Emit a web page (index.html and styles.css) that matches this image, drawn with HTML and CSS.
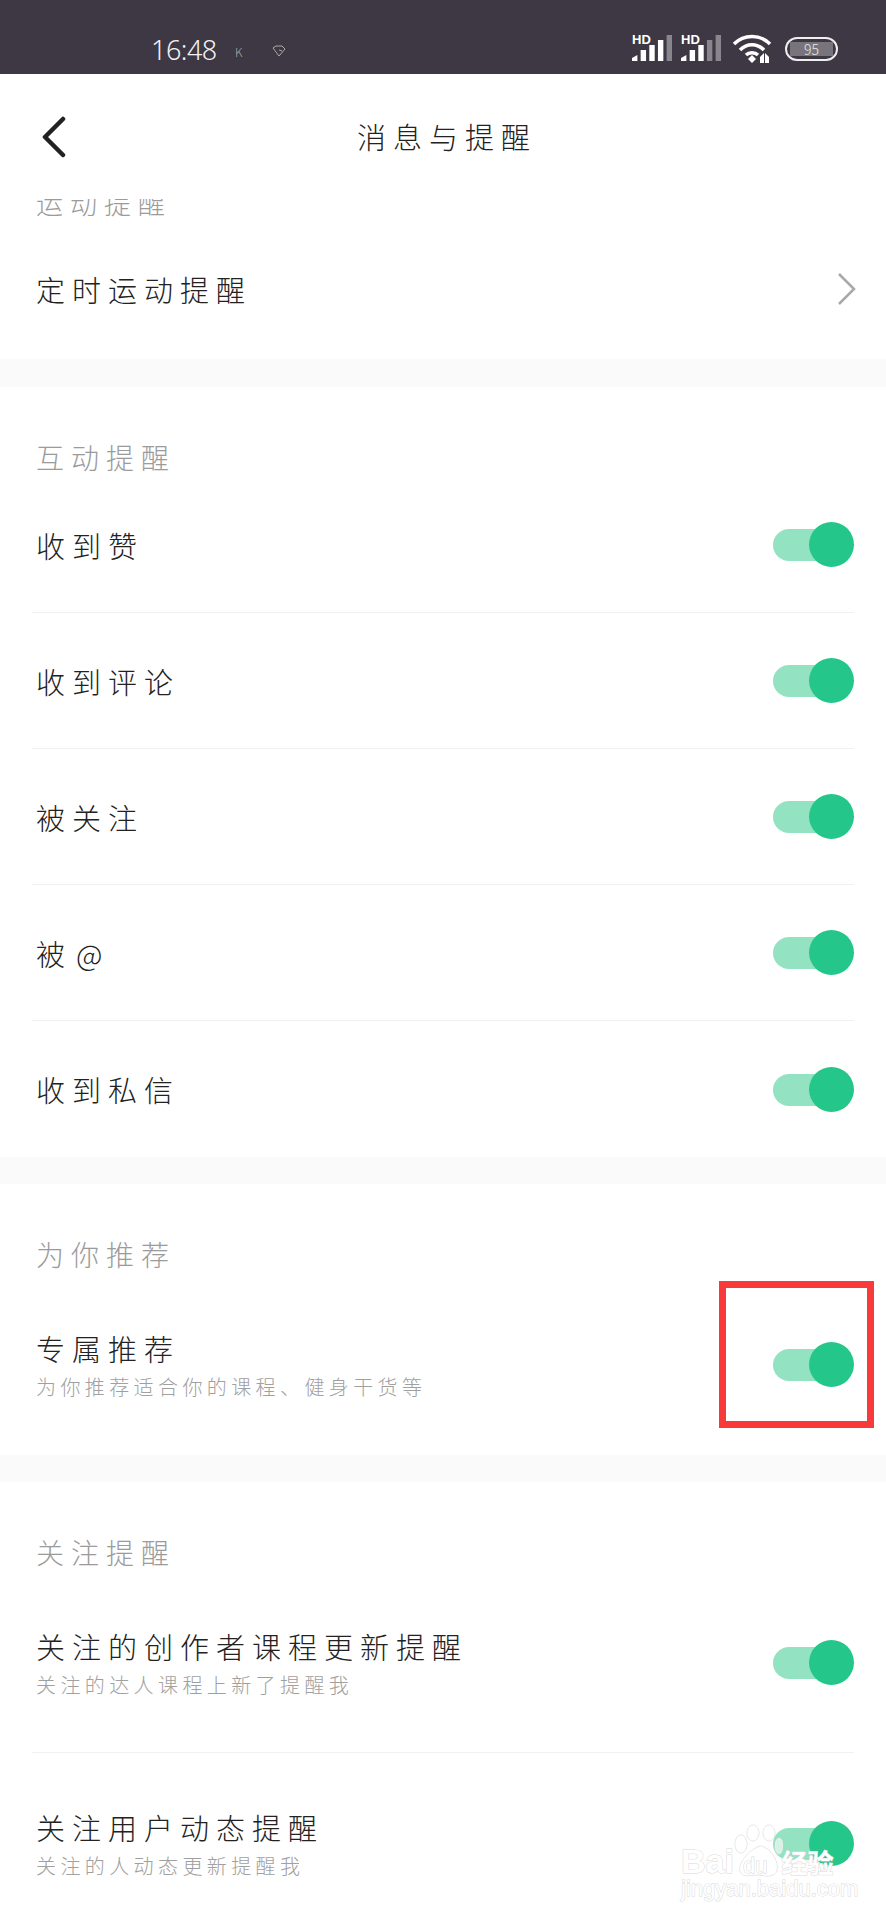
FILE: index.html
```html
<!DOCTYPE html>
<html lang="zh-CN">
<head>
    <meta charset="UTF-8">
    <meta name="viewport" content="width=device-width, initial-scale=1.0">
    <title>消息与提醒</title>
    <link rel="stylesheet" href="styles.css">
</head>
<body>
    <div class="status-bar">
        <span class="time">16:48</span>
        <span class="status-k">K</span>
        <svg class="status-gem" width="14" height="12" viewBox="0 0 14 12"><path d="M1 3 L4 1 H10 L13 4 L7 11 Z M10 6 L7 5" fill="none" stroke="#aaa" stroke-width="1"/></svg>
        <div class="status-right">
            <div class="signal">
                <span class="hd">HD</span>
                <svg width="40" height="26" viewBox="1 0 37 26" preserveAspectRatio="none"><path d="M1 26 V23 L6 20 V26 Z" fill="#fff"/><rect x="9" y="15" width="5" height="11" fill="#fff"/><rect x="17" y="10" width="5" height="16" fill="#fff"/><rect x="25" y="5" width="5" height="21" fill="#fff"/><rect x="33" y="0" width="5" height="26" fill="#88858c"/></svg>
            </div>
            <div class="signal">
                <span class="hd">HD</span>
                <svg width="40" height="26" viewBox="1 0 37 26" preserveAspectRatio="none"><path d="M1 26 V23 L6 20 V26 Z" fill="#fff"/><rect x="9" y="15" width="5" height="11" fill="#fff"/><rect x="17" y="10" width="5" height="16" fill="#fff"/><rect x="25" y="5" width="5" height="21" fill="#88858c"/><rect x="33" y="0" width="5" height="26" fill="#88858c"/></svg>
            </div>
            <svg class="wifi" width="40" height="30" viewBox="0 0 40 30" fill="none" stroke="#fff" stroke-width="3.5"><path d="M2 11 C12 1 28 1 38 11"/><path d="M8 17 C15 10 25 10 32 17"/><path d="M14 22 C17 19 23 19 26 22"/><path d="M16 26 L20 22 L24 26 L20 30 Z" fill="#fff" stroke="none"/><path d="M28 24 L32 20 V30 H28 Z M33 20 L37 24 V30 H33 Z" fill="#fff" stroke="none"/></svg>
            <div class="battery"><span class="battery-num">95</span></div>
        </div>
    </div>

    <div class="nav">
        <svg class="back" width="24" height="42" viewBox="0 0 24 42" fill="none" stroke="#222" stroke-width="4.5" stroke-linecap="round" stroke-linejoin="round"><path d="M21 3 L3 21 L21 39"/></svg>
        <h1 class="nav-title">消息与提醒</h1>
    </div>

    <div class="content">
        <section class="group group-first">
            <div class="clip-label"><div class="group-label">运动提醒</div></div>
            <div class="row row-link">
                <div class="row-title">定时运动提醒</div>
                <svg class="more" width="20" height="34" viewBox="0 0 20 34" fill="none" stroke="#a8a8a8" stroke-width="2.5"><path d="M2 2 L17 17 L2 32"/></svg>
            </div>
        </section>

        <section class="group group-social">
            <div class="group-label">互动提醒</div>
            <div class="row"><div class="row-title">收到赞</div><div class="toggle"><i></i></div></div>
            <div class="row"><div class="row-title">收到评论</div><div class="toggle"><i></i></div></div>
            <div class="row"><div class="row-title">被关注</div><div class="toggle"><i></i></div></div>
            <div class="row"><div class="row-title">被<span class="at">@</span></div><div class="toggle"><i></i></div></div>
            <div class="row"><div class="row-title">收到私信</div><div class="toggle"><i></i></div></div>
        </section>

        <section class="group group-pick">
            <div class="group-label">为你推荐</div>
            <div class="row row-tall">
                <div>
                    <div class="row-title">专属推荐</div>
                    <div class="row-sub">为你推荐适合你的课程、健身干货等</div>
                </div>
                <div class="toggle"><i></i></div>
            </div>
        </section>

        <section class="group">
            <div class="group-label">关注提醒</div>
            <div class="row row-tall">
                <div>
                    <div class="row-title">关注的创作者课程更新提醒</div>
                    <div class="row-sub">关注的达人课程上新了提醒我</div>
                </div>
                <div class="toggle"><i></i></div>
            </div>
            <div class="row row-tall">
                <div>
                    <div class="row-title">关注用户动态提醒</div>
                    <div class="row-sub">关注的人动态更新提醒我</div>
                </div>
                <div class="toggle"><i></i></div>
            </div>
        </section>
    </div>

    <!-- 红框标注 -->
    <div class="red-box"></div>

    <!-- 水印 -->
    <div class="watermark">
        <svg class="paw" width="50" height="60" viewBox="0 0 50 60" fill="rgba(255,255,255,0.6)" stroke="#ddd" stroke-width="1"><ellipse cx="8" cy="20" rx="6" ry="9"/><ellipse cx="20" cy="9" rx="6" ry="8"/><ellipse cx="36" cy="9" rx="6" ry="8"/><ellipse cx="46" cy="22" rx="4" ry="8"/><path d="M28 22 C38 24 46 38 44 46 C42 54 32 52 27 51 C20 50 10 55 7 47 C5 38 18 24 28 22 Z"/></svg>
        <div class="wm-main"><span>Bai</span><span class="wm-du">du</span><span class="wm-cn">经验</span></div>
        <div class="wm-url">jingyan.baidu.com</div>
    </div>
</body>
</html>
```

FILE: styles.css
```css
html, body {
    margin: 0;
    padding: 0;
}

body {
    position: relative;
    width: 886px;
    height: 1920px;
    overflow: hidden;
    background: #fff;
    font-family: "Noto Sans CJK SC", "Noto Sans", sans-serif;
    font-weight: 300;
    color: #222;
}

.status-bar {
    display: flex;
    align-items: center;
    height: 74px;
    padding: 28px 48px 0 151px;
    box-sizing: border-box;
    background: #3d3843;
    color: #f2f2f2;
}

.time {
    width: 84px;
    margin-top: -3px;
    font-family: "Noto Sans", sans-serif;
    font-size: 27px;
    font-weight: 300;
    letter-spacing: -0.5px;
}

.status-k {
    font-size: 12px;
    color: #aaa;
    width: 37px;
}

.status-right {
    display: flex;
    align-items: flex-end;
    gap: 9px;
    margin-left: auto;
    padding-bottom: 8px;
}

.signal {
    position: relative;
    width: 40px;
    height: 26px;
}

.signal svg {
    display: block;
}

.hd {
    position: absolute;
    left: 0;
    top: -1px;
    font-family: "Liberation Sans", sans-serif;
    font-size: 13px;
    font-weight: bold;
    line-height: 12px;
    color: #fff;
}

.wifi {
    margin-left: 2px;
    margin-bottom: -2px;
}

.battery {
    display: flex;
    align-items: center;
    justify-content: center;
    width: 53px;
    height: 24px;
    margin-left: 4px;
    box-sizing: border-box;
    border: 2px solid #eee;
    border-radius: 12px;
    background: linear-gradient(#77747b, #77747b) center / 43px 14px no-repeat;
}

.battery-num {
    font-size: 14px;
    line-height: 14px;
    color: #e8e8e8;
}

.nav {
    position: relative;
    display: flex;
    justify-content: center;
    align-items: center;
    height: 125px;
    padding: 0 0 2px 8px;
    box-sizing: border-box;
}

.back {
    position: absolute;
    left: 42px;
    top: 42px;
}

.nav-title {
    margin: 0;
    font-size: 29px;
    font-weight: 300;
    letter-spacing: 7px;
    color: #222;
}

.group {
    border-bottom: 26px solid #fafafa;
}

.group:last-child {
    border-bottom: 0;
}

.group-first {
    border-bottom-width: 28px;
}

.group-social {
    border-bottom-width: 27px;
}

.group-pick {
    border-bottom-width: 27px;
}

.group-label {
    height: 36px;
    padding: 52px 0 2px 36px;
    font-size: 28px;
    line-height: 36px;
    letter-spacing: 7px;
    color: #9b9b9b;
}

.clip-label {
    height: 20px;
    overflow: hidden;
}

.clip-label .group-label {
    height: 36px;
    padding: 0 0 0 36px;
    margin-top: -14px;
    font-size: 27px;
}

.row {
    display: flex;
    justify-content: space-between;
    align-items: center;
    height: 136px;
    margin: 0 32px;
    padding-left: 4px;
    border-bottom: 1px solid #f1f1f1;
    box-sizing: border-box;
}

.row:last-child {
    border-bottom: 0;
}

.row-link {
    height: 140px;
}

.row-tall {
    height: 181px;
}

.more {
    margin-right: -3px;
}

.row-title {
    font-size: 29px;
    line-height: 42px;
    letter-spacing: 7px;
    color: #222;
}

.at {
    margin-left: 4px;
}

.row-tall .row-title {
    margin-bottom: 3px;
}

.row-sub {
    font-size: 20px;
    line-height: 30px;
    letter-spacing: 4.4px;
    color: #a0a0a0;
}

.toggle {
    position: relative;
    width: 81px;
    height: 45px;
}

.toggle::before {
    content: "";
    position: absolute;
    left: 0;
    top: 7px;
    width: 68px;
    height: 32px;
    border-radius: 16px;
    background: #93e2c1;
}

.toggle i {
    position: absolute;
    right: 0;
    top: 0;
    width: 45px;
    height: 45px;
    border-radius: 50%;
    background: #25c68a;
}

.red-box {
    position: absolute;
    left: 719px;
    top: 1281px;
    width: 155px;
    height: 147px;
    box-sizing: border-box;
    border: 7px solid #f93a3a;
}

.watermark {
    position: absolute;
    left: 681px;
    top: 1824px;
    width: 160px;
    height: 80px;
    color: #fff;
    font-family: "Liberation Sans", sans-serif;
    -webkit-text-stroke: 1px #d9d9d9;
    paint-order: stroke fill;
}

.paw {
    position: absolute;
    left: 52px;
    top: 0;
}

.wm-main {
    position: absolute;
    left: 0;
    top: 21px;
    display: flex;
    align-items: baseline;
    font-size: 34px;
    font-weight: bold;
    line-height: 32px;
    white-space: nowrap;
}

.wm-du {
    margin-left: 9px;
    font-size: 22px;
    font-weight: normal;
}

.wm-cn {
    margin-left: 14px;
    font-family: "Noto Sans CJK SC", sans-serif;
    font-size: 26px;
}

.wm-url {
    position: absolute;
    left: 0;
    top: 54px;
    font-size: 22px;
    line-height: 22px;
    white-space: nowrap;
}
```
